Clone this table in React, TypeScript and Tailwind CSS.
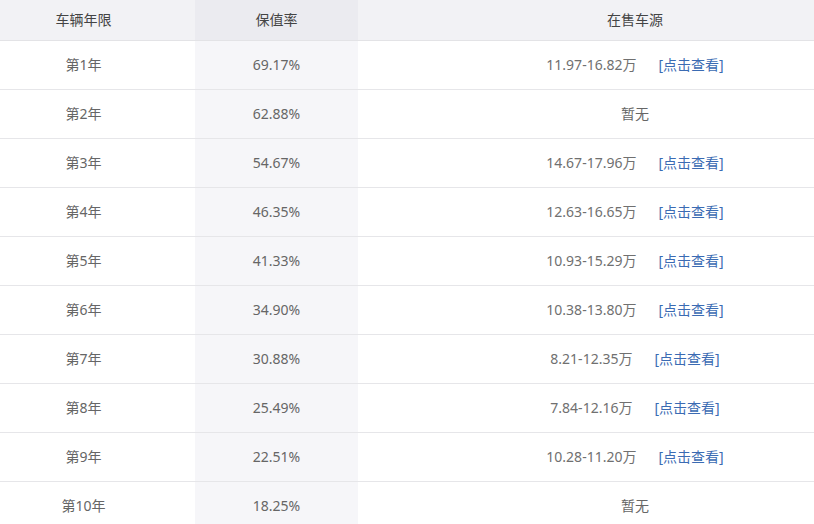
import React from 'react';

type Row = { year: string; rate: string; price?: string };

const rows: Row[] = [
  { year: '第1年', rate: '69.17%', price: '11.97-16.82万' },
  { year: '第2年', rate: '62.88%' },
  { year: '第3年', rate: '54.67%', price: '14.67-17.96万' },
  { year: '第4年', rate: '46.35%', price: '12.63-16.65万' },
  { year: '第5年', rate: '41.33%', price: '10.93-15.29万' },
  { year: '第6年', rate: '34.90%', price: '10.38-13.80万' },
  { year: '第7年', rate: '30.88%', price: '8.21-12.35万' },
  { year: '第8年', rate: '25.49%', price: '7.84-12.16万' },
  { year: '第9年', rate: '22.51%', price: '10.28-11.20万' },
  { year: '第10年', rate: '18.25%' },
];

export default function App() {
  return (
    <div
      className="w-[814px] h-[524px] overflow-hidden bg-white text-[14px] text-[#666]"
      style={{ fontFamily: '"Noto Sans", "Noto Sans CJK SC", sans-serif' }}
    >
      {/* Header */}
      <div className="flex h-[41px] bg-[#f2f2f5] border-b border-[#e3e3e6] text-[#444]">
        <div className="w-[195px] pr-[28px] pb-[2px] flex items-center justify-center">车辆年限</div>
        <div className="w-[163px] pb-[2px] bg-[#ebebf0] flex items-center justify-center">保值率</div>
        <div className="flex-1 pl-[98px] pb-[2px] flex items-center justify-center">在售车源</div>
      </div>
      {rows.map((r) => (
        <div key={r.year} className="flex h-[49px] border-b border-[#e6e6e9]">
          <div className="w-[195px] pr-[28px] pb-[2px] flex items-center justify-center">{r.year}</div>
          <div className="w-[163px] pb-[2px] bg-[#f6f6f9] flex items-center justify-center">{r.rate}</div>
          <div className="flex-1 pl-[98px] pb-[2px] flex items-center justify-center gap-[22px]">
            {r.price ? (
              <>
                <span className="text-[#707070]">{r.price}</span>
                <a className="text-[#3b6bb3]">[点击查看]</a>
              </>
            ) : (
              <span>暂无</span>
            )}
          </div>
        </div>
      ))}
    </div>
  );
}
